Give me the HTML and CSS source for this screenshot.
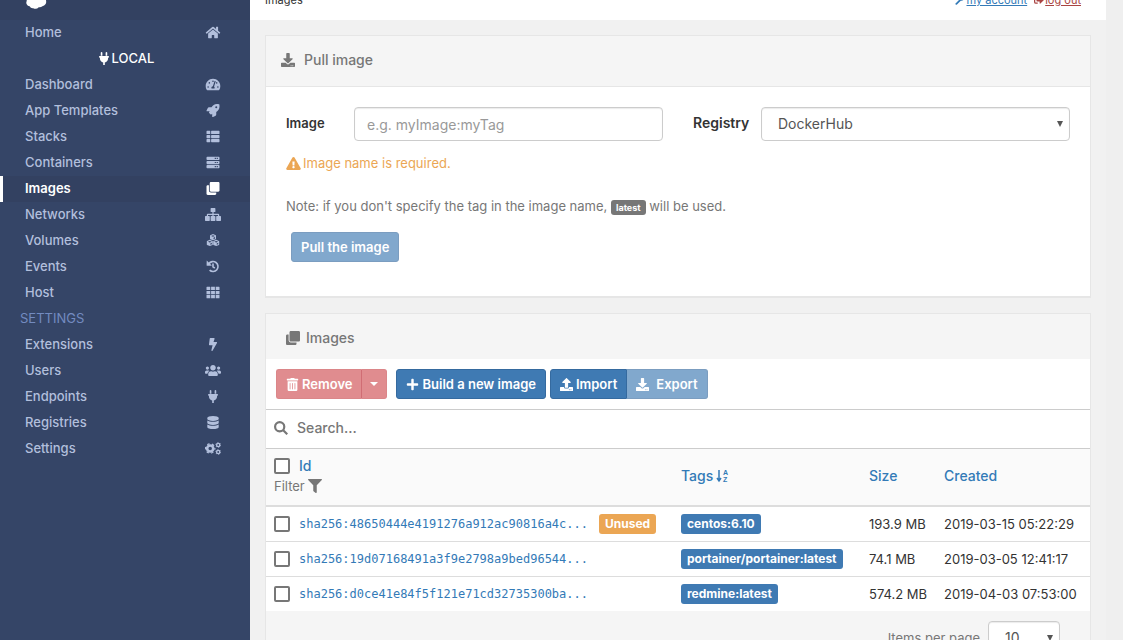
FILE: index.html
```html
<!DOCTYPE html>
<html lang="en">
<head>
<meta charset="utf-8">
<title>Images</title>
<link rel="stylesheet" href="styles.css">
</head>
<body>
<svg class="sprite" aria-hidden="true">
  <symbol id="home" viewBox="0 0 576 512"><path d="M280.37 148.26L96 300.11V464a16 16 0 0 0 16 16l112.06-.29a16 16 0 0 0 15.92-16V368a16 16 0 0 1 16-16h64a16 16 0 0 1 16 16v95.64a16 16 0 0 0 16 16.05L464 480a16 16 0 0 0 16-16V300L295.67 148.26a12.19 12.19 0 0 0-15.3 0zM571.6 251.47L488 182.56V44.05a12 12 0 0 0-12-12h-56a12 12 0 0 0-12 12v72.61L318.47 43a48 48 0 0 0-61 0L4.34 251.47a12 12 0 0 0-1.6 16.9l25.5 31A12 12 0 0 0 45.15 301l235.22-193.74a12.19 12.19 0 0 1 15.3 0L530.9 301a12 12 0 0 0 16.9-1.6l25.5-31a12 12 0 0 0-1.7-16.93z"/></symbol>
  <symbol id="plug" viewBox="0 0 384 512"><path d="M256 144V32c0-17.673 14.327-32 32-32s32 14.327 32 32v112h-64zm112 16H16c-8.837 0-16 7.163-16 16v32c0 8.837 7.163 16 16 16h16v32c0 77.406 54.969 141.971 128 156.796V512h64v-99.204c73.031-14.825 128-79.39 128-156.796v-32h16c8.837 0 16-7.163 16-16v-32c0-8.837-7.163-16-16-16zm-240-16V32c0-17.673-14.327-32-32-32S64 14.327 64 32v112h64z"/></symbol>
  <symbol id="gauge" viewBox="0 0 576 512"><path d="M288 32C128.94 32 0 160.94 0 320c0 52.8 14.25 102.26 39.06 144.8 5.61 9.62 16.3 15.2 27.44 15.2h443c11.14 0 21.83-5.58 27.44-15.2C561.75 422.26 576 372.8 576 320c0-159.06-128.94-288-288-288zm0 64c14.71 0 26.58 10.13 30.32 23.65-1.11 2.26-2.64 4.23-3.45 6.67l-9.22 27.67c-5.13 3.49-10.97 6.01-17.64 6.01-17.67 0-32-14.33-32-32S270.33 96 288 96zM96 384c-17.67 0-32-14.33-32-32s14.33-32 32-32 32 14.33 32 32-14.33 32-32 32zm48-160c-17.67 0-32-14.33-32-32s14.33-32 32-32 32 14.33 32 32-14.33 32-32 32zm246.77-72.41l-61.33 184C343.13 347.33 352 364.54 352 384c0 11.72-3.38 22.55-8.88 32H232.88c-5.5-9.45-8.88-20.28-8.88-32 0-33.94 26.5-61.43 59.9-63.59l61.34-184.01c4.17-12.56 17.73-19.45 30.36-15.17 12.57 4.19 19.35 17.79 15.17 30.36zm14.66 57.2l15.52-46.55c3.47-1.29 7.13-2.23 11.05-2.23 17.67 0 32 14.33 32 32s-14.33 32-32 32c-11.38-.01-20.89-6.28-26.57-15.22zM480 384c-17.67 0-32-14.33-32-32s14.33-32 32-32 32 14.33 32 32-14.33 32-32 32z"/></symbol>
  <symbol id="rocket" viewBox="0 0 512 512"><path d="M505.1 19.1c-1.2-5.5-6.6-11-12.2-12.2C460.7 0 435.5 0 410.4 0 307.2 0 245.3 55.2 199 128H94.800c-16.300 0-35.500 11.900-42.900 26.500L2.500 253.300A28.400 28.400 0 0 0 0 264a24 24 0 0 0 24 24h103.800l-22.500 22.500c-11.300 11.300-13 32.200 0 45.200l50.900 50.900c11.200 11.200 32.200 13.200 45.300 0l22.500-22.500V488a24 24 0 0 0 24 24 28.600 28.600 0 0 0 10.700-2.500l98.700-49.400c14.600-7.300 26.500-26.500 26.500-42.900V312.800c72.600-46.300 128-108.400 128-211.100.1-25.200.1-50.400-6.800-82.600zM384 168a40 40 0 1 1 40-40 40 40 0 0 1-40 40z"/></symbol>
  <symbol id="list" viewBox="0 0 512 512"><path d="M24 32h101a24 24 0 0 1 24 24v80a24 24 0 0 1-24 24H24a24 24 0 0 1-24-24V56a24 24 0 0 1 24-24zM24 192h101a24 24 0 0 1 24 24v80a24 24 0 0 1-24 24H24a24 24 0 0 1-24-24v-80a24 24 0 0 1 24-24zM24 352h101a24 24 0 0 1 24 24v80a24 24 0 0 1-24 24H24a24 24 0 0 1-24-24v-80a24 24 0 0 1 24-24zM205 32h283a24 24 0 0 1 24 24v80a24 24 0 0 1-24 24H205a24 24 0 0 1-24-24V56a24 24 0 0 1 24-24zM205 192h283a24 24 0 0 1 24 24v80a24 24 0 0 1-24 24H205a24 24 0 0 1-24-24v-80a24 24 0 0 1 24-24zM205 352h283a24 24 0 0 1 24 24v80a24 24 0 0 1-24 24H205a24 24 0 0 1-24-24v-80a24 24 0 0 1 24-24z"/></symbol>
  <symbol id="server" viewBox="0 0 512 512"><path fill-rule="evenodd" d="M32 32h448a32 32 0 0 1 32 32v64a32 32 0 0 1-32 32H32a32 32 0 0 1-32-32V64a32 32 0 0 1 32-32zm292 40v48h48V72zm76 0v48h48V72zM32 192h448a32 32 0 0 1 32 32v64a32 32 0 0 1-32 32H32a32 32 0 0 1-32-32v-64a32 32 0 0 1 32-32zm292 40v48h48v-48zm76 0v48h48v-48zM32 352h448a32 32 0 0 1 32 32v64a32 32 0 0 1-32 32H32a32 32 0 0 1-32-32v-64a32 32 0 0 1 32-32zm292 40v48h48v-48zm76 0v48h48v-48z"/></symbol>
  <symbol id="clone" viewBox="0 0 512 512"><path d="M464 0c26.510 0 48 21.490 48 48v288c0 26.510-21.490 48-48 48H176c-26.510 0-48-21.490-48-48V48c0-26.510 21.490-48 48-48h288M176 416c-44.112 0-80-35.888-80-80V128H48c-26.510 0-48 21.490-48 48v288c0 26.510 21.490 48 48 48h288c26.510 0 48-21.490 48-48v-48H176z"/></symbol>
  <symbol id="sitemap" viewBox="0 0 640 512"><path d="M248 0h144a24 24 0 0 1 24 24v112a24 24 0 0 1-24 24h-48v64h184a40 40 0 0 1 40 40v56h48a24 24 0 0 1 24 24v144a24 24 0 0 1-24 24H472a24 24 0 0 1-24-24V344a24 24 0 0 1 24-24h48v-48H344v48h48a24 24 0 0 1 24 24v144a24 24 0 0 1-24 24H248a24 24 0 0 1-24-24V344a24 24 0 0 1 24-24h48v-48H120v48h48a24 24 0 0 1 24 24v144a24 24 0 0 1-24 24H24a24 24 0 0 1-24-24V344a24 24 0 0 1 24-24h48v-56a40 40 0 0 1 40-40h184v-64h-48a24 24 0 0 1-24-24V24a24 24 0 0 1 24-24z"/></symbol>
  <symbol id="cubes" viewBox="0 0 512 512"><g id="cube"><path d="M256 4l108 42a16 16 0 0 1 10 15v128a16 16 0 0 1-10 15l-108 44-108-44a16 16 0 0 1-10-15V61a16 16 0 0 1 10-15zM256 48l-76 30 76 30 76-30zM276 146v56l60-25v-56z" fill-rule="evenodd"/></g><use href="#cube" x="-126" y="226"/><use href="#cube" x="126" y="226"/></symbol>
  <symbol id="history" viewBox="0 0 512 512"><path d="M92 150A196 196 0 1 1 122 398M256 136v130l72 54" fill="none" stroke="currentColor" stroke-width="64"/><path d="M8 24L202 202a18 18 0 0 1-10 22H24a20 20 0 0 1-20-20z"/></symbol>
  <symbol id="grid" viewBox="0 0 512 512"><path d="M20 32h109a20 20 0 0 1 20 20v88a20 20 0 0 1-20 20H20a20 20 0 0 1-20-20V52a20 20 0 0 1 20-20zM181 32h150v128H181zM363 32h129a20 20 0 0 1 20 20v108H363zM0 192h149v128H0zM181 192h150v128H181zM363 192h149v128H363zM0 352h149v128H20a20 20 0 0 1-20-20zM181 352h150v128H181zM363 352h149v108a20 20 0 0 1-20 20H363z"/></symbol>
  <symbol id="bolt" viewBox="0 0 320 512"><path d="M296 160H180.600l42.600-129.800C227.200 15 215.700 0 200 0H56C44 0 33.800 8.900 32.200 20.800l-32 240C-1.700 275.200 9.500 288 24 288h118.700L96.600 482.500c-3.600 15.200 8 29.500 23.300 29.500 8.400 0 16.400-4.400 20.800-12l176-304c9.300-15.900-2.200-36-20.700-36z"/></symbol>
  <symbol id="users" viewBox="0 0 640 512"><path d="M96 224c35.300 0 64-28.700 64-64s-28.700-64-64-64-64 28.700-64 64 28.700 64 64 64zm448 0c35.300 0 64-28.700 64-64s-28.700-64-64-64-64 28.700-64 64 28.700 64 64 64zm32 32h-64c-17.600 0-33.500 7.100-45.100 18.600 40.300 22.100 68.900 62 75.100 109.400h66c17.700 0 32-14.300 32-32v-32c0-35.300-28.700-64-64-64zm-256 0c61.900 0 112-50.100 112-112S381.900 32 320 32 208 82.100 208 144s50.100 112 112 112zm76.800 32h-8.300c-20.800 10-43.900 16-68.500 16s-47.600-6-68.500-16h-8.300C179.600 288 128 339.600 128 403.200V432c0 26.500 21.500 48 48 48h288c26.500 0 48-21.500 48-48v-28.800c0-63.600-51.600-115.200-115.200-115.200zm-223.700-13.400C161.500 263.100 145.600 256 128 256H64c-35.300 0-64 28.700-64 64v32c0 17.700 14.300 32 32 32h65.900c6.300-47.400 34.900-87.300 75.200-109.400z"/></symbol>
  <symbol id="database" viewBox="0 0 448 512"><path d="M448 73.143v45.714C448 159.143 347.667 192 224 192S0 159.143 0 118.857V73.143C0 32.857 100.333 0 224 0s224 32.857 224 73.143zM448 176v102.857C448 319.143 347.667 352 224 352S0 319.143 0 278.857V176c48.125 33.143 136.208 48.572 224 48.572S399.874 209.143 448 176zm0 160v102.857C448 479.143 347.667 512 224 512S0 479.143 0 438.857V336c48.125 33.143 136.208 48.572 224 48.572S399.874 369.143 448 336z"/></symbol>
  <symbol id="cogs" viewBox="0 0 640 512"><g fill="none" stroke="currentColor"><circle cx="208" cy="256" r="122" stroke-width="104"/><circle cx="208" cy="256" r="186" stroke-width="52" stroke-dasharray="97.400 97.400" stroke-dashoffset="48"/><circle cx="528" cy="116" r="64" stroke-width="56"/><circle cx="528" cy="116" r="98" stroke-width="30" stroke-dasharray="51.300 51.300"/><circle cx="528" cy="396" r="64" stroke-width="56"/><circle cx="528" cy="396" r="98" stroke-width="30" stroke-dasharray="51.300 51.300"/></g></symbol>
  <symbol id="download" viewBox="0 0 512 512"><path d="M216 0h80c13.300 0 24 10.700 24 24v168h87.700c17.800 0 26.700 21.500 14.100 34.100L269.700 378.300c-7.500 7.500-19.800 7.500-27.300 0L90.100 226.100c-12.600-12.600-3.700-34.100 14.100-34.100H192V24c0-13.300 10.700-24 24-24zm296 376v112c0 13.300-10.700 24-24 24H24c-13.300 0-24-10.700-24-24V376c0-13.300 10.700-24 24-24h146.700l49 49c20.100 20.100 52.500 20.100 72.600 0l49-49H488c13.300 0 24 10.700 24 24zm-124 88c0-11-9-20-20-20s-20 9-20 20 9 20 20 20 20-9 20-20zm64 0c0-11-9-20-20-20s-20 9-20 20 9 20 20 20 20-9 20-20z"/></symbol>
  <symbol id="upload" viewBox="0 0 512 512"><path d="M296 384h-80c-13.300 0-24-10.700-24-24V192h-87.700c-17.800 0-26.700-21.500-14.100-34.100L242.300 5.700c7.500-7.500 19.800-7.500 27.300 0l152.200 152.200c12.600 12.600 3.700 34.100-14.100 34.100H320v168c0 13.300-10.700 24-24 24zm216-8v112c0 13.300-10.700 24-24 24H24c-13.300 0-24-10.700-24-24V376c0-13.300 10.700-24 24-24h136v8c0 30.900 25.100 56 56 56h80c30.900 0 56-25.100 56-56v-8h136c13.300 0 24 10.700 24 24zm-124 88c0-11-9-20-20-20s-20 9-20 20 9 20 20 20 20-9 20-20zm64 0c0-11-9-20-20-20s-20 9-20 20 9 20 20 20 20-9 20-20z"/></symbol>
  <symbol id="warning" viewBox="0 0 576 512"><path d="M569.517 440.013C587.975 472.007 564.806 512 527.940 512H48.054c-36.937 0-59.999-40.055-41.577-71.987L246.423 23.985c18.467-32.009 64.720-31.951 83.154 0l239.940 416.028zM288 354c-25.405 0-46 20.595-46 46s20.595 46 46 46 46-20.595 46-46-20.595-46-46-46zm-43.673-165.346l7.418 136c.347 6.364 5.609 11.346 11.982 11.346h48.546c6.373 0 11.635-4.982 11.982-11.346l7.418-136c.375-6.874-5.098-12.654-11.982-12.654h-63.383c-6.884 0-12.356 5.780-11.981 12.654z"/></symbol>
  <symbol id="trash" viewBox="0 0 448 512"><path d="M32 464a48 48 0 0 0 48 48h288a48 48 0 0 0 48-48V128H32zm272-256a16 16 0 0 1 32 0v224a16 16 0 0 1-32 0zm-96 0a16 16 0 0 1 32 0v224a16 16 0 0 1-32 0zm-96 0a16 16 0 0 1 32 0v224a16 16 0 0 1-32 0zM432 32H312l-9.400-18.700A24 24 0 0 0 281.100 0H166.800a23.720 23.720 0 0 0-21.400 13.300L136 32H16A16 16 0 0 0 0 48v32a16 16 0 0 0 16 16h416a16 16 0 0 0 16-16V48a16 16 0 0 0-16-16z"/></symbol>
  <symbol id="plus" viewBox="0 0 448 512"><path d="M416 208H272V64a32 32 0 0 0-32-32h-32a32 32 0 0 0-32 32v144H32a32 32 0 0 0-32 32v32a32 32 0 0 0 32 32h144v144a32 32 0 0 0 32 32h32a32 32 0 0 0 32-32V304h144a32 32 0 0 0 32-32v-32a32 32 0 0 0-32-32z"/></symbol>
  <symbol id="search" viewBox="0 0 512 512"><g fill="none" stroke="currentColor" stroke-width="80"><circle cx="208" cy="208" r="168"/><path d="M328 328l156 156"/></g></symbol>
  <symbol id="filter" viewBox="0 0 512 512"><path d="M487.976 0H24.028C2.710 0-8.047 25.866 7.058 40.971L192 225.941V432c0 7.831 3.821 15.170 10.237 19.662l80 55.980C298.020 518.690 320 507.493 320 487.980V225.941l184.947-184.970C520.021 25.896 509.338 0 487.976 0z"/></symbol>
  <symbol id="wrench" viewBox="0 0 512 512"><path d="M508 110l-75 74-68-11-11-68 74-75C370 15 304 30 268 84c-28 42-28 80-17 123L22 436a64 64 0 0 0 54 54h20l209-209c44 12 96 0 137-40 36-36 46-85 37-131z" transform="translate(-8 10)"/></symbol>
  <symbol id="signout" viewBox="0 0 512 512"><path d="M497 273L329 441c-15 15-41 4.500-41-17v-96H152c-13 0-24-11-24-24v-96c0-13 11-24 24-24h136V88c0-21.400 26-32 41-17l168 168a24 24 0 0 1 0 34zM192 436v-40a12 12 0 0 0-12-12H96a32 32 0 0 1-32-32V160a32 32 0 0 1 32-32h84a12 12 0 0 0 12-12V76a12 12 0 0 0-12-12H96a96 96 0 0 0-96 96v192a96 96 0 0 0 96 96h84a12 12 0 0 0 12-12z"/></symbol>
</svg>

<nav class="sidebar">
  <div class="brand">
    <svg class="logo" viewBox="0 0 24 24" aria-label="Logo" role="img"><path d="M2 14a5 5 0 0 1 3-6 7 7 0 0 1 13 1 5 5 0 0 1 5 5 5 5 0 0 1-4 6 5 5 0 0 1-4 1 5 5 0 0 1-6 1 4 4 0 0 1-4-2 4 4 0 0 1-3-6z" fill="#fff"/></svg>
  </div>
  <ul class="menu">
    <li><a href="#">Home<svg class="icon"><use href="#home"/></svg></a></li>
    <li class="endpoint"><svg class="icon"><use href="#plug"/></svg>LOCAL</li>
    <li><a href="#">Dashboard<svg class="icon"><use href="#gauge"/></svg></a></li>
    <li><a href="#">App Templates<svg class="icon"><use href="#rocket"/></svg></a></li>
    <li><a href="#">Stacks<svg class="icon"><use href="#list"/></svg></a></li>
    <li><a href="#">Containers<svg class="icon"><use href="#server"/></svg></a></li>
    <li><a class="active" href="#">Images<svg class="icon"><use href="#clone"/></svg></a></li>
    <li><a href="#">Networks<svg class="icon"><use href="#sitemap"/></svg></a></li>
    <li><a href="#">Volumes<svg class="icon"><use href="#cubes"/></svg></a></li>
    <li><a href="#">Events<svg class="icon"><use href="#history"/></svg></a></li>
    <li><a href="#">Host<svg class="icon"><use href="#grid"/></svg></a></li>
    <li class="section">SETTINGS</li>
    <li><a href="#">Extensions<svg class="icon"><use href="#bolt"/></svg></a></li>
    <li><a href="#">Users<svg class="icon"><use href="#users"/></svg></a></li>
    <li><a href="#">Endpoints<svg class="icon"><use href="#plug"/></svg></a></li>
    <li><a href="#">Registries<svg class="icon"><use href="#database"/></svg></a></li>
    <li><a href="#">Settings<svg class="icon"><use href="#cogs"/></svg></a></li>
  </ul>
</nav>

<main class="content">
  <header class="topbar">
    <span>Images</span>
    <div class="user-links">
      <svg class="icon blue"><use href="#wrench"/></svg><a href="#">my account</a>
      <svg class="icon red"><use href="#signout"/></svg><a class="red" href="#">log out</a>
    </div>
  </header>

  <section class="widget">
    <h2 class="widget-title bordered"><svg class="icon"><use href="#download"/></svg>Pull image</h2>
    <form class="pull-form">
      <div class="fields">
        <div class="field">
          <label for="image">Image</label>
          <input class="control" id="image" type="text" placeholder="e.g. myImage:myTag">
        </div>
        <div class="field">
          <label class="large" for="registry">Registry</label>
          <div class="select-box"><select class="control" id="registry"><option>DockerHub</option></select></div>
        </div>
      </div>
      <p class="warning"><svg class="icon"><use href="#warning"/></svg>Image name is required.</p>
      <p class="note">Note: if you don't specify the tag in the image name, <span class="tag-hint">latest</span> will be used.</p>
      <button class="btn primary submit" type="submit" disabled>Pull the image</button>
    </form>
  </section>

  <section class="widget">
    <h2 class="widget-title list-title"><svg class="icon"><use href="#clone"/></svg>Images</h2>
    <div class="toolbar">
      <div class="group">
        <button class="btn danger" type="button" disabled><svg class="icon"><use href="#trash"/></svg>Remove</button>
        <button class="btn danger toggle" type="button" aria-label="More remove options" disabled><span class="caret"></span></button>
      </div>
      <button class="btn primary build" type="button"><svg class="icon"><use href="#plus"/></svg>Build a new image</button>
      <div class="group">
        <button class="btn primary" type="button"><svg class="icon"><use href="#upload"/></svg>Import</button>
        <button class="btn primary export" type="button" disabled><svg class="icon"><use href="#download"/></svg>Export</button>
      </div>
    </div>
    <div class="search">
      <svg class="icon"><use href="#search"/></svg>
      <input type="text" aria-label="Search" placeholder="Search...">
    </div>
    <table class="images">
      <colgroup><col><col class="col-tags"><col class="col-size"><col class="col-created"></colgroup>
      <thead>
        <tr>
          <th>
            <div class="id-cell"><input type="checkbox" aria-label="Select all"><a href="#">Id</a></div>
            <div class="filter">Filter<svg class="icon"><use href="#filter"/></svg></div>
          </th>
          <th><a class="sorted" href="#">Tags<svg class="sort" viewBox="0 0 14 14"><path d="M3 1v11M1 9l2 3 2-3" fill="none" stroke="currentColor" stroke-width="1.500"/><text x="7" y="6">A</text><text x="7" y="13">Z</text></svg></a></th>
          <th><a href="#">Size</a></th>
          <th><a href="#">Created</a></th>
        </tr>
      </thead>
      <tbody>
        <tr>
          <td><div class="id-cell"><input type="checkbox" aria-label="Select centos:6.10"><a class="hash" href="#">sha256:48650444e4191276a912ac90816a4c...</a><span class="label unused">Unused</span></div></td>
          <td><span class="label">centos:6.10</span></td><td>193.9 MB</td><td>2019-03-15 05:22:29</td>
        </tr>
        <tr>
          <td><div class="id-cell"><input type="checkbox" aria-label="Select portainer/portainer:latest"><a class="hash" href="#">sha256:19d07168491a3f9e2798a9bed96544...</a></div></td>
          <td><span class="label">portainer/portainer:latest</span></td><td>74.1 MB</td><td>2019-03-05 12:41:17</td>
        </tr>
        <tr>
          <td><div class="id-cell"><input type="checkbox" aria-label="Select redmine:latest"><a class="hash" href="#">sha256:d0ce41e84f5f121e71cd32735300ba...</a></div></td>
          <td><span class="label">redmine:latest</span></td><td>574.2 MB</td><td>2019-04-03 07:53:00</td>
        </tr>
      </tbody>
    </table>
    <div class="pager">
      <label for="per-page">Items per page</label>
      <div class="select-box small"><select class="control" id="per-page"><option>10</option></select></div>
    </div>
  </section>
</main>
</body>
</html>
```
FILE: styles.css
```css
* { box-sizing: border-box; }

body {
  margin: 0;
  height: 100vh;
  overflow: hidden;
  display: grid;
  grid-template-columns: 250px 1fr;
  padding-right: 17px;
  background: #efefef;
  color: #333;
  font: 13px/20px Inter, "Noto Sans", sans-serif;
}

a { color: #337ab7; text-decoration: none; }
input, select, button { font: inherit; }

.sprite { position: absolute; width: 0; height: 0; }
.icon { width: 16px; height: 13px; fill: currentColor; flex: none; }

/* Sidebar */
.sidebar { background: #354567; min-height: 0; }
.brand { height: 20px; display: flex; align-items: flex-end; padding: 0 25px 9px; background: #334161; }
.logo { width: 22px; height: 24px; flex: none; }
.menu { list-style: none; margin: 0; padding: 0; line-height: 24px; font-weight: 500; color: #b2bfdc; }
.menu a {
  display: flex;
  align-items: center;
  justify-content: space-between;
  padding: 0 29px 2px 22px;
  border-left: 3px solid transparent;
  color: #b2bfdc;
}
.menu a.active { background: #334161; border-left-color: #fff; color: #fff; font-weight: 600; }
.endpoint { display: flex; align-items: center; justify-content: center; padding-bottom: 2px; color: #fff; }
.section { padding: 0 0 2px 20px; color: #738bc0; font-weight: 400; }

/* Page header */
.content { background: #f1f1f1; min-width: 0; min-height: 0; }
.topbar {
  height: 20px;
  display: flex;
  align-items: flex-end;
  justify-content: space-between;
  padding: 0 25px 12px 15px;
  background: #fff;
  font-size: 11px;
  line-height: 16px;
}
.user-links { display: flex; align-items: center; }
.user-links .icon { width: 12px; height: 10px; }
.user-links a { text-decoration: underline; }
.user-links a + .icon { margin-left: 6px; }
.blue { color: #337ab7; }
.user-links .red { color: #a94442; }

/* Widgets */
.widget { margin: 15px 15px 0; background: #fff; border: 1px solid #e6e6e6; border-bottom-width: 2px; }
.widget-title {
  display: flex;
  align-items: center;
  gap: 8px;
  margin: 0;
  padding: 14px 14px 16px;
  background: #f5f5f5;
  color: #777;
  font-size: 14px;
  font-weight: 500;
}
.widget-title .icon { height: 14px; }
.bordered { border-bottom: 1px solid #e6e6e6; }
.list-title { padding: 14px 19px 11px; gap: 5px; }

.pull-form { padding: 20px 20px 34px; }
.fields { display: grid; grid-template-columns: 1fr 1fr; gap: 30px; }
.field { display: grid; grid-template-columns: 68px 1fr; }
.field label { font-weight: 600; line-height: 32px; }
.field label.large { font-size: 14px; }
.control {
  width: 100%;
  height: 34px;
  padding: 0 12px;
  border: 1px solid #ccc;
  border-radius: 4px;
  background: #fff;
  box-shadow: inset 0 1px 1px rgba(0, 0, 0, .08);
  color: #555;
  font-size: 14px;
}
select.control { appearance: none; padding-left: 16px; }
.select-box { position: relative; }
.select-box::after {
  content: "";
  position: absolute;
  right: 7px;
  top: 14px;
  border: 3px solid transparent;
  border-top: 6px solid #555;
  border-bottom: 0;
}
.control::placeholder { color: #999; }
.warning { display: flex; align-items: center; gap: 2px; margin: 12px 0 0; color: #eba654; }
.warning .icon { width: 15px; }
.note { margin: 23px 0 0; color: #777; }
.tag-hint {
  display: inline-block;
  padding: 1px 5px;
  border-radius: 3px;
  background: #777;
  color: #fff;
  font-size: 9px;
  font-weight: 700;
  line-height: 13px;
}

.btn {
  display: flex;
  align-items: center;
  justify-content: center;
  gap: 3px;
  height: 30px;
  padding: 0 9px;
  border: 1px solid #356a9f;
  border-radius: 3px;
  color: #fff;
  font-weight: 600;
  line-height: 18px;
  white-space: nowrap;
}
.btn .icon { width: 13px; }
.btn:disabled { opacity: .65; }
.primary { background: #3f7ab3; }
.danger { background: #d15054; border-color: #c9464b; }
.submit { margin: 16px 5px 0; }

.toolbar { display: flex; padding: 10px; border-bottom: 1px solid #ccc; }
.build { margin: 0 4px 0 9px; }
.group { display: flex; }
.group .btn:first-child { border-radius: 3px 0 0 3px; }
.group .btn:last-child { border-radius: 0 3px 3px 0; border-left: 0; }
.export { gap: 7px; }
.group .danger:first-child { border-right-color: #b8202a; }
.toggle { padding: 0 8px; }
.caret { border: 4px solid transparent; border-top-color: #fff; border-bottom: 0; }

.search { display: flex; align-items: center; gap: 9px; height: 39px; padding: 0 8px 2px; border-bottom: 1px solid #ccc; color: #777; }
.search .icon { width: 14px; height: 14px; }
.search input { flex: 1; min-width: 0; border: 0; padding: 0; outline: 0; background: none; font-size: 14px; }
.search input::placeholder { color: #777; opacity: 1; font-weight: 500; }

/* Image list */
.images { width: 100%; table-layout: fixed; border-collapse: collapse; }
.images th, .images td { padding: 0 8px; text-align: left; white-space: nowrap; }
.images th { height: 57px; padding-bottom: 3px; background: #fafafa; border-bottom: 2px solid #ddd; font-size: 14px; font-weight: 500; }
.images td { height: 35px; border-bottom: 1px solid #ddd; }
.images tbody tr:last-child td { border-bottom: 0; }
.col-tags { width: 188px; }
.col-size { width: 75px; }
.col-created { width: 154px; }
.id-cell { display: flex; align-items: center; }
.id-cell input {
  appearance: none;
  width: 16px;
  height: 16px;
  margin: 0 9px 0 0;
  border: 2px solid #777;
  border-radius: 2px;
  background: #fff;
}
.filter { display: flex; align-items: center; color: #777; font-size: 13px; font-weight: 400; gap: 3px; }
.filter .icon { width: 14px; height: 14px; }
.hash { font: 12px/20px "DejaVu Sans Mono", monospace; }
.sorted { display: inline-flex; align-items: center; gap: 3px; }
.sort { width: 14px; height: 14px; }
.sort text { font: 700 7px "Liberation Sans", sans-serif; fill: currentColor; }
.label {
  display: inline-block;
  padding: 0 6px;
  border-radius: 3px;
  background: #3f7ab3;
  color: #fff;
  font-size: 12px;
  font-weight: 700;
  line-height: 20px;
}
.unused { margin-left: 11px; background: #eba654; }

.pager { display: flex; align-items: center; justify-content: flex-end; gap: 8px; padding: 10px 30px; background: #f5f5f5; color: #777; }
.select-box.small { width: 72px; }
```
